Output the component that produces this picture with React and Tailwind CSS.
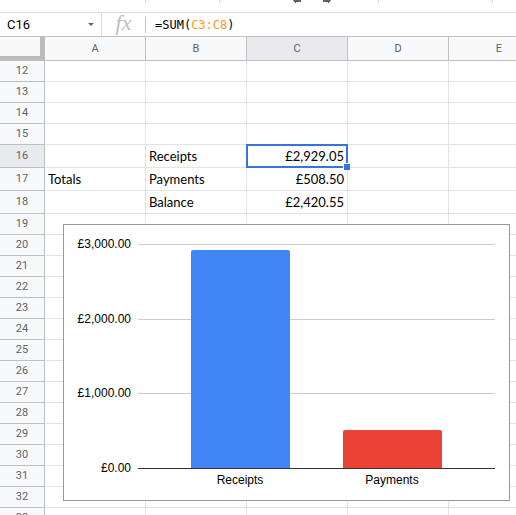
const columns = ["A", "B", "C", "D", "E"];

const cells = {
  B16: "Receipts",
  C16: "£2,929.05",
  A17: "Totals",
  B17: "Payments",
  C17: "£508.50",
  B18: "Balance",
  C18: "£2,420.55",
};

const rows = Array.from({ length: 22 }, (_, i) => i + 12);
const tallRows = [16, 17, 18];

const ticks = [
  { label: "£3,000.00", y: 19 },
  { label: "£2,000.00", y: 94 },
  { label: "£1,000.00", y: 168 },
];

const bars = [
  { label: "Receipts", x: 127, y: 25, color: "#4285f4" },
  { label: "Payments", x: 279, y: 205, color: "#ea4335" },
];

function Toolbar() {
  return (
    <div className="flex h-[13px] items-start border-b border-[#dadce0]">
      <div className="h-[3px] w-[146px] border-r border-[#dadce0]" />
      <div className="h-[3px] w-[74px] border-r border-[#dadce0]" />
      <div className="flex h-[3px] w-[159px] border-r border-[#dadce0] pl-[72px]">
        <svg className="h-1 w-10 shrink-0" viewBox="0 0 40 4" fill="#5f6368" aria-hidden="true">
          <path d="M1 0h8v2H4v1H3V2H2z" />
          <path d="M31 0h8l-1 2h-1v1h-1V2h-5z" />
        </svg>
      </div>
      <div className="h-[3px] w-[114px] border-r border-[#dadce0]" />
    </div>
  );
}

function FormulaBar() {
  return (
    <div className="flex h-6 items-center border-b border-[#c0c0c0]">
      <div className="flex h-full w-[102px] items-center border-r border-[#dadce0] pr-[7px]">
        <input
          aria-label="Name box"
          defaultValue="C16"
          className="w-20 min-w-0 flex-1 bg-transparent pl-[7px] font-['Roboto',sans-serif] text-[13px] text-black outline-none"
        />
        <button type="button" aria-label="Named ranges" className="flex h-4 w-[6px] items-center">
          <svg className="h-[3px] w-[6px]" viewBox="0 0 6 3" fill="#5f6368">
            <path d="M0 0h6L3 3z" />
          </svg>
        </button>
      </div>
      <div className="flex h-4 w-11 items-center justify-center border-r border-[#c0c0c0] pb-1 font-['Liberation_Serif',serif] text-[22px] leading-4 text-[#bdbdbd] italic">
        fx
      </div>
      <div className="pl-[9px] font-['DejaVu_Sans_Mono',monospace] text-[12px] leading-4 text-black">
        =SUM(<span className="text-[#f7981d]">C3:C8</span>)
      </div>
    </div>
  );
}

function Cell({ id }) {
  const selected = id === "C16";
  const align = id.startsWith("C") ? "text-right" : "text-left";

  return (
    <td
      className={`relative border-r border-b border-[#e2e3e3] px-[3px] py-0 ${align} ${selected ? "z-10" : ""}`}
    >
      {cells[id]}
      {selected && (
        <div className="absolute -inset-px border-2 border-[#3871e0]">
          <div className="absolute -right-1 -bottom-1 box-content size-[6px] border-t border-l border-white bg-[#3871e0] bg-clip-padding" />
        </div>
      )}
    </td>
  );
}

function Grid() {
  return (
    <table className="w-[550px] table-fixed border-separate border-spacing-0 font-['Lato',sans-serif] text-[13px] leading-4 text-black">
      <thead className="font-['Roboto',sans-serif] text-[11px] text-[#5f6368]">
        <tr className="h-6">
          <th className="w-[45px] border-r-[5px] border-b-[5px] border-[#bcbcbc] bg-[#f8f9fa] p-0" />
          {columns.map((name) => (
            <th
              key={name}
              scope="col"
              className={`w-[101px] border-r border-b border-[#c0c0c0] p-0 font-normal ${name === "C" ? "bg-[#e8eaed]" : "bg-[#f8f9fa]"}`}
            >
              {name}
            </th>
          ))}
        </tr>
      </thead>
      <tbody>
        {rows.map((row) => (
          <tr key={row} className={tallRows.includes(row) ? "h-[23px]" : "h-[21px]"}>
            <th
              scope="row"
              className={`border-r border-b border-[#c0c0c0] p-0 font-['Roboto',sans-serif] text-[11px] font-normal text-[#5f6368] ${row === 16 ? "bg-[#e8eaed]" : "bg-[#f8f9fa]"}`}
            >
              {row}
            </th>
            {columns.map((name) => (
              <Cell key={name} id={`${name}${row}`} />
            ))}
          </tr>
        ))}
      </tbody>
    </table>
  );
}

function Chart() {
  return (
    <div className="absolute top-[187px] left-[63px] border border-[#999999] bg-white">
      <svg
        width="445"
        height="275"
        viewBox="0 0 445 275"
        role="img"
        aria-label="Receipts and payments"
        className="block font-['Liberation_Sans',sans-serif] text-[12px]"
      >
        {ticks.map((tick) => (
          <g key={tick.label}>
            <rect x="74" y={tick.y} width="357" height="1" fill="#cccccc" />
            <text x="67" y={tick.y + 4} textAnchor="end">
              {tick.label}
            </text>
          </g>
        ))}
        {bars.map((bar) => (
          <g key={bar.label}>
            <path
              d={`M${bar.x} 243V${bar.y + 2}q0-2 2-2h95q2 0 2 2V243z`}
              fill={bar.color}
            />
            <text x={bar.x + 49} y="259" textAnchor="middle">
              {bar.label}
            </text>
          </g>
        ))}
        <rect x="74" y="243" width="357" height="1" fill="#333333" />
        <text x="67" y="247" textAnchor="end">
          £0.00
        </text>
      </svg>
    </div>
  );
}

export default function App() {
  return (
    <div className="h-screen overflow-hidden bg-white">
      <Toolbar />
      <FormulaBar />
      <div className="relative">
        <Grid />
        <Chart />
      </div>
    </div>
  );
}
